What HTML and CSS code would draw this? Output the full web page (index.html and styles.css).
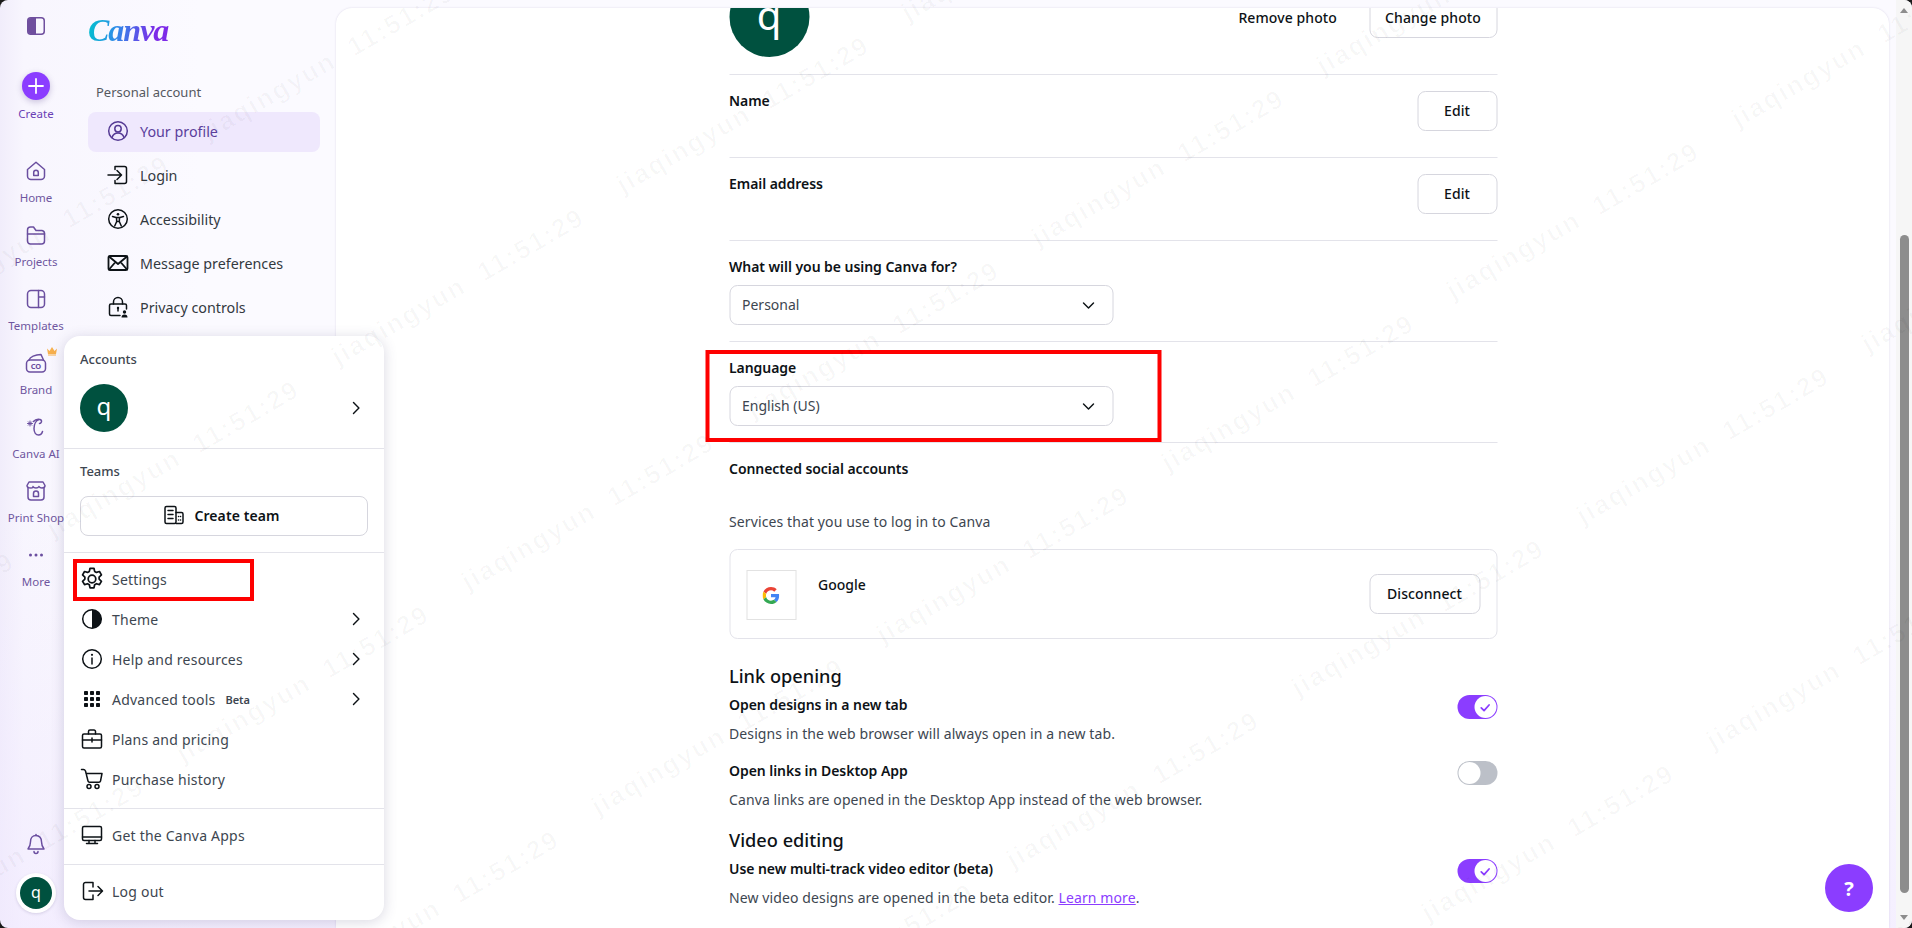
FILE: index.html
```html
<!DOCTYPE html>
<html lang="en">
<head>
<meta charset="utf-8">
<title>Canva settings</title>
<link rel="stylesheet" href="styles.css">
</head>
<body>
<svg class="sprite" width="0" height="0" aria-hidden="true">
  <symbol id="chev-r" viewBox="0 0 24 24"><path d="M9 5.500 15.500 12 9 18.500" fill="none" stroke="currentColor" stroke-width="1.700" stroke-linecap="round" stroke-linejoin="round"/></symbol>
  <symbol id="chev-d" viewBox="0 0 24 24"><path d="M6 9.500 12 15.500 18 9.500" fill="none" stroke="currentColor" stroke-width="1.700" stroke-linecap="round" stroke-linejoin="round"/></symbol>
  <symbol id="check" viewBox="0 0 24 24"><path d="M6 12.500 10.500 17 18.500 8" fill="none" stroke="currentColor" stroke-width="2.800" stroke-linecap="round" stroke-linejoin="round"/></symbol>
</svg>
<div class="app">
  <nav class="rail">
    <svg class="rail-toggle" viewBox="0 0 18 18"><rect x="0.750" y="0.750" width="16.500" height="16.500" rx="3" fill="none" stroke="currentColor" stroke-width="1.500"/><path d="M4 1h5v16H4a3 3 0 0 1-3-3V4a3 3 0 0 1 3-3Z" fill="currentColor"/></svg>
    <div class="create-btn"><svg viewBox="0 0 28 28" class="create-plus"><path d="M14 7v14M7 14h14" stroke="currentColor" stroke-width="1.800" stroke-linecap="round"/></svg></div>
    <span class="rail-label create-label">Create</span>
    <div class="rail-items">
      <a class="rail-item"><svg class="ico" viewBox="0 0 24 24"><path d="M3.500 10.500 12 3.200l8.500 7.300V17a3.500 3.500 0 0 1-3.500 3.500H7A3.500 3.500 0 0 1 3.500 17Z"/><path d="M9.700 16.500v-3a2.300 2.300 0 0 1 4.600 0v3Z"/></svg><span class="rail-label">Home</span></a>
      <a class="rail-item"><svg class="ico" viewBox="0 0 24 24"><path d="M3.500 7A3 3 0 0 1 6.500 4h3l2.500 3.500h6a3 3 0 0 1 2.500 3V18a3 3 0 0 1-3 3h-11a3 3 0 0 1-3-3Z"/><path d="M3.500 11h17"/></svg><span class="rail-label">Projects</span></a>
      <a class="rail-item"><svg class="ico" viewBox="0 0 24 24"><rect x="3.500" y="3.500" width="17" height="17" rx="3.500"/><path d="M14.500 3.500v17M14.500 10h6"/></svg><span class="rail-label">Templates</span></a>
      <a class="rail-item brand-item"><svg class="crown" viewBox="0 0 12 10"><path d="M1 2.500 3.500 5 6 1l2.500 4L11 2.500 10 8H2Z"/><path d="M2 8.500h8v1H2Z"/></svg><svg class="ico" viewBox="0 0 24 24"><rect x="2.500" y="9" width="19" height="12" rx="3.500"/><path d="M5 9c1-3 6-5.500 12-5.500L19.500 9"/><text class="co" x="12" y="18.400">CO</text></svg><span class="rail-label">Brand</span></a>
      <a class="rail-item"><svg class="ico" viewBox="0 0 24 24"><path d="M9.500 6.500C12 3.500 17 3.500 17.500 6c.3 1.500-1 2.500-2 2.500M15 4.500c-3 1-5 5-5 9 0 4 2 6.500 4.500 6.500 2 0 3.500-1.500 4-3.500"/><path d="M6 6v5M3.500 8.500h5M4.300 6.800l3.400 3.400M7.700 6.800l-3.400 3.400" class="thin"/></svg><span class="rail-label">Canva AI</span></a>
      <a class="rail-item"><svg class="ico" viewBox="0 0 24 24"><path d="M4 9v9a3 3 0 0 0 3 3h10a3 3 0 0 0 3-3V9"/><path d="M3 6.500 5 3h14l2 3.500c0 2-1.500 2.500-3 2.500-1.200 0-2.500-.5-3-1.500-.5 1-1.700 1.500-3 1.500s-2.500-.5-3-1.500C9.500 8.500 8.200 9 7 9 4.500 9 3 8.500 3 6.500Z"/><path d="M9.500 17.500v-3a2.500 2.500 0 0 1 5 0v3Z"/></svg><span class="rail-label">Print Shop</span></a>
      <a class="rail-item"><svg class="ico" viewBox="0 0 24 24"><circle cx="6.500" cy="12" r="1.500" class="solid"/><circle cx="12" cy="12" r="1.500" class="solid"/><circle cx="17.500" cy="12" r="1.500" class="solid"/></svg><span class="rail-label">More</span></a>
    </div>
    <svg class="ico bell" viewBox="0 0 24 24"><path d="M12 3.500c-3.500 0-5.500 2.800-5.500 6.200 0 3.500-1 5.300-2.500 7.300h16c-1.500-2-2.500-3.800-2.500-7.300 0-3.400-2-6.200-5.500-6.200Z"/><path d="M10 19.500a2 2 0 0 0 4 0M12 3.500V2.500"/></svg>
    <div class="rail-avatar"><span class="avatar small">q</span></div>
  </nav>

  <aside class="panel">
    <div class="logo">Canva</div>
    <div class="panel-title">Personal account</div>
    <a class="panel-row active"><svg class="ico" viewBox="0 0 24 24"><circle cx="12" cy="12" r="9.300"/><circle cx="12" cy="9.800" r="3.200"/><path d="M6 18.500c1-3 3.500-4.500 6-4.500s5 1.500 6 4.500"/></svg>Your profile</a>
    <a class="panel-row"><svg class="ico" viewBox="0 0 24 24"><path d="M9 3.500h9.500a2 2 0 0 1 2 2v13a2 2 0 0 1-2 2H9M9 3.500V6.500M9 17.500v3"/><path d="M2 12h13M11 7.500 15.500 12 11 16.500"/></svg>Login</a>
    <a class="panel-row"><svg class="ico" viewBox="0 0 24 24"><circle cx="12" cy="12" r="9.300"/><circle cx="12" cy="7.200" r="1.300" class="solid"/><path d="M6.500 9.500 10 10.500h4l3.500-1M10.500 10.500l.2 4-2 4.500M13.500 10.500l-.2 4 2 4.500M10.700 14.500h2.600"/></svg>Accessibility</a>
    <a class="panel-row"><svg class="ico bold" viewBox="0 0 24 24"><rect x="2.500" y="5" width="19" height="14" rx="1.500"/><path d="M3 5.500 12 13l9-7.500M3 18.500 9.500 11M21 18.500 14.500 11"/></svg>Message preferences</a>
    <a class="panel-row"><svg class="ico" viewBox="0 0 24 24"><path d="M7.500 9V7a4.500 4.500 0 0 1 9 0v2"/><path d="M14 20.500H5a1.500 1.500 0 0 1-1.500-1.500v-8.500A1.500 1.500 0 0 1 5 9h14a1.500 1.500 0 0 1 1.500 1.500V14"/><path d="M12 12.500v3.500"/><circle cx="12" cy="13" r="1.200" class="solid"/><circle cx="18.500" cy="17" r="1.700" class="solid"/><path d="M15.500 22.500a3 3 0 0 1 6 0Z" class="solid"/></svg>Privacy controls</a>
  </aside>

  <main class="main">
    <div class="content">
      <section class="row photo-row">
        <span class="avatar big">q</span>
        <div class="photo-actions">
          <span class="remove">Remove photo</span>
          <button class="btn change-btn">Change photo</button>
        </div>
      </section>
      <section class="row field-row">
        <span class="strong">Name</span>
        <button class="btn edit-btn">Edit</button>
      </section>
      <section class="row field-row">
        <span class="strong">Email address</span>
        <button class="btn edit-btn">Edit</button>
      </section>
      <section class="row select-row">
        <div class="strong">What will you be using Canva for?</div>
        <div class="select"><span>Personal</span><svg class="chev"><use href="#chev-d"/></svg></div>
      </section>
      <section class="row select-row language">
        <div class="strong">Language</div>
        <div class="select"><span>English (US)</span><svg class="chev"><use href="#chev-d"/></svg></div>
        <div class="red-box lang-box"></div>
      </section>
      <section class="social">
        <div class="strong">Connected social accounts</div>
        <p class="muted services">Services that you use to log in to Canva</p>
        <div class="social-card">
          <div class="g-box">
            <svg viewBox="0 0 48 48" class="g-logo"><path fill="#EA4335" d="M24 9.500c3.500 0 6.700 1.200 9.200 3.600l6.900-6.900C35.900 2.400 30.500 0 24 0 14.600 0 6.500 5.400 2.600 13.200l8 6.200C12.400 13.700 17.700 9.500 24 9.500Z"/><path fill="#4285F4" d="M47 24.500c0-1.600-.2-3.100-.4-4.500H24v9h12.900c-.6 3-2.200 5.500-4.800 7.200l7.700 6C44.400 37.900 47 31.800 47 24.500Z"/><path fill="#FBBC05" d="M10.500 28.600A14.500 14.500 0 0 1 9.800 24c0-1.600.3-3.100.7-4.600l-8-6.200A24 24 0 0 0 0 24c0 3.900.9 7.500 2.600 10.800l7.900-6.200Z"/><path fill="#34A853" d="M24 48c6.500 0 11.900-2.100 15.900-5.800l-7.700-6c-2.200 1.500-4.900 2.300-8.200 2.300-6.300 0-11.600-4.200-13.500-9.900l-8 6.200C6.500 42.600 14.600 48 24 48Z"/></svg>
          </div>
          <span class="strong-light g-name">Google</span>
          <button class="btn disconnect-btn">Disconnect</button>
        </div>
      </section>
      <h2 class="heading first">Link opening</h2>
      <div class="setting">
        <div><div class="strong">Open designs in a new tab</div><p class="muted desc">Designs in the web browser will always open in a new tab.</p></div>
        <span class="toggle on"><span class="knob"><svg class="tick"><use href="#check"/></svg></span></span>
      </div>
      <div class="setting spaced">
        <div><div class="strong">Open links in Desktop App</div><p class="muted desc">Canva links are opened in the Desktop App instead of the web browser.</p></div>
        <span class="toggle"><span class="knob"></span></span>
      </div>
      <h2 class="heading">Video editing</h2>
      <div class="setting">
        <div><div class="strong">Use new multi-track video editor (beta)</div><p class="muted desc">New video designs are opened in the beta editor. <a class="link">Learn more</a>.</p></div>
        <span class="toggle on"><span class="knob"><svg class="tick"><use href="#check"/></svg></span></span>
      </div>
    </div>
  </main>

  <div class="scrollbar">
    <span class="arrow up"></span>
    <div class="track"><span class="thumb"></span></div>
    <span class="arrow down"></span>
  </div>

  <div class="popup">
    <section class="pop-sec accounts">
      <div class="pop-title">Accounts</div>
      <div class="account-row"><span class="avatar medium">q</span><svg class="pchev"><use href="#chev-r"/></svg></div>
    </section>
    <section class="pop-sec teams">
      <div class="pop-title">Teams</div>
      <button class="btn create-team"><svg class="ico dark" viewBox="0 0 24 24"><rect x="3" y="3.500" width="11" height="17" rx="1.500"/><path d="M14 9.500h5.500a1.500 1.500 0 0 1 1.500 1.500v8a1.500 1.500 0 0 1-1.500 1.500H14M6 7.500h5M6 11.500h5M6 15.500h5M16.500 13.500h.1M18.500 13.500h.1M16.500 17h.1M18.500 17h.1"/></svg>Create team</button>
    </section>
    <section class="pop-sec menu">
      <a class="pop-row settings-row"><svg class="ico dark" viewBox="0 0 24 24"><g transform="translate(12 12) scale(1.150) translate(-12 -12)"><circle cx="12" cy="12" r="3.300"/><path d="M10.300 2.700h3.400l.6 2.700 1.600.9 2.600-.8 1.700 2.900-2 1.900v1.800l2 1.900-1.700 2.900-2.600-.8-1.600.9-.6 2.700h-3.400l-.6-2.700-1.600-.9-2.600.8-1.700-2.900 2-1.900v-1.800l-2-1.900 1.700-2.900 2.600.8 1.600-.9Z"/></g></svg>Settings<span class="red-box set-box"></span></a>
      <a class="pop-row"><svg class="ico dark" viewBox="0 0 24 24"><circle cx="12" cy="12" r="9.300"/><path d="M12 2.700a9.300 9.300 0 0 1 0 18.600Z" class="solid"/></svg>Theme<svg class="pchev"><use href="#chev-r"/></svg></a>
      <a class="pop-row"><svg class="ico dark" viewBox="0 0 24 24"><circle cx="12" cy="12" r="9.300"/><path d="M12 11v6"/><circle cx="12" cy="7.800" r="1.100" class="solid"/></svg>Help and resources<svg class="pchev"><use href="#chev-r"/></svg></a>
      <a class="pop-row"><svg class="ico dark" viewBox="0 0 24 24"><g class="solid"><rect x="4" y="4" width="4" height="4" rx=".8"/><rect x="10" y="4" width="4" height="4" rx=".8"/><rect x="16" y="4" width="4" height="4" rx=".8"/><rect x="4" y="10" width="4" height="4" rx=".8"/><rect x="10" y="10" width="4" height="4" rx=".8"/><rect x="16" y="10" width="4" height="4" rx=".8"/><rect x="4" y="16" width="4" height="4" rx=".8"/><rect x="10" y="16" width="4" height="4" rx=".8"/><rect x="16" y="16" width="4" height="4" rx=".8"/></g></svg>Advanced tools<span class="beta">Beta</span><svg class="pchev"><use href="#chev-r"/></svg></a>
      <a class="pop-row"><svg class="ico dark" viewBox="0 0 24 24"><rect x="2.500" y="7" width="19" height="14" rx="1.500"/><path d="M8.500 7V4.500a1.500 1.500 0 0 1 1.500-1.500h4a1.500 1.500 0 0 1 1.500 1.500V7M2.500 13h19M12 11v4"/></svg>Plans and pricing</a>
      <a class="pop-row"><svg class="ico dark" viewBox="0 0 24 24"><path d="M1.500 2.500H3.500c1 0 1.500.5 2 1.500l2.500 10c.2.800.8 1.200 1.500 1.200H19c.8 0 1.300-.5 1.500-1.200l1.500-7.500H6"/><circle cx="9" cy="19.500" r="2"/><circle cx="17" cy="19.500" r="2"/></svg>Purchase history</a>
    </section>
    <section class="pop-sec menu">
      <a class="pop-row"><svg class="ico dark" viewBox="0 0 24 24"><rect x="2.500" y="3.500" width="19" height="14" rx="1.500"/><path d="M2.500 14h19" class="thick"/><path d="M9 17.500v3M15 17.500v3M6.500 20.500h11"/></svg>Get the Canva Apps</a>
    </section>
    <section class="pop-sec menu last">
      <a class="pop-row"><svg class="ico dark" viewBox="0 0 24 24"><path d="M13 3.500H5.500a2 2 0 0 0-2 2v13a2 2 0 0 0 2 2H13V16M13 8V3.500"/><path d="M9 12h13M18 7.500 22.500 12 18 16.500"/></svg>Log out</a>
    </section>
  </div>

  <button class="help">?</button>

  <svg class="watermarks" width="1912" height="928" aria-hidden="true">
    <defs>
      <text id="wm" class="wm-text" transform="rotate(-30)">jiaqingyun  11:51:29</text>
      <g id="wm-row">
        <use href="#wm" x="-2280" y="1376"/><use href="#wm" x="-1995" y="1204"/><use href="#wm" x="-1710" y="1032"/><use href="#wm" x="-1425" y="860"/><use href="#wm" x="-1140" y="688"/><use href="#wm" x="-855" y="516"/><use href="#wm" x="-570" y="344"/><use href="#wm" x="-285" y="172"/><use href="#wm" x="0" y="0"/><use href="#wm" x="285" y="-172"/><use href="#wm" x="570" y="-344"/><use href="#wm" x="855" y="-516"/><use href="#wm" x="1140" y="-688"/>
      </g>
    </defs>
    <use href="#wm-row" x="803" y="-825"/><use href="#wm-row" x="933" y="-600"/><use href="#wm-row" x="1063" y="-375"/><use href="#wm-row" x="1193" y="-150"/><use href="#wm-row" x="1323" y="75"/><use href="#wm-row" x="1453" y="300"/><use href="#wm-row" x="1583" y="525"/><use href="#wm-row" x="1713" y="750"/><use href="#wm-row" x="1843" y="975"/><use href="#wm-row" x="1973" y="1200"/>
  </svg>
</div>
</body>
</html>
```

FILE: styles.css
```css
* { box-sizing: border-box; }
html, body { margin: 0; height: 100%; background: #1a1a1a; }
body { font-family: "Noto Sans", "Liberation Sans", sans-serif; font-size: 14px; color: #0d1216; overflow: hidden; }
button { font-family: inherit; }
p { margin: 0; }
.sprite { position: absolute; }

.app { position: relative; display: flex; width: 1912px; height: 928px; overflow: hidden; border-radius: 8px; background: linear-gradient(180deg, rgba(240, 232, 255, 0) 55%, rgba(240, 232, 255, .6) 100%), linear-gradient(90deg, #f1edfb 0, #f8f6fe 24px, #fbfaff 200px, #fbfaff 100%); }

/* left rail */
.rail { width: 72px; flex: none; display: flex; flex-direction: column; align-items: center; padding: 17px 0 15px; color: #6b4fa0; }
.rail-toggle { width: 18px; height: 18px; flex: none; color: #6f4f9e; }
.create-btn { width: 28px; height: 28px; margin-top: 37px; border-radius: 50%; background: #8b3dff; color: #fff; box-shadow: 0 2px 6px rgba(60, 30, 120, .25); flex: none; }
.create-plus { display: block; width: 28px; height: 28px; }
.rail-label { display: block; font-size: 11.500px; line-height: 16px; white-space: nowrap; text-align: center; color: #6f569f; }
.create-label { margin-top: 6px; color: #6a3fb5; }
.rail-items { display: flex; flex-direction: column; gap: 17px; margin-top: 37px; }
.rail-item { position: relative; display: flex; flex-direction: column; align-items: center; gap: 7px; width: 72px; }
.crown { position: absolute; left: 46px; top: -5px; width: 12px; height: 10px; fill: #f7b04d; }
.co { font-size: 7.500px; font-weight: 700; text-anchor: middle; fill: currentColor; stroke: none; }
.bell { margin-top: auto; }
.rail-avatar { width: 40px; height: 40px; margin-top: 17px; border-radius: 50%; background: #fff; display: flex; align-items: center; justify-content: center; box-shadow: 0 1px 3px rgba(40, 30, 80, .15); }

/* generic icon */
.ico { width: 24px; height: 24px; flex: none; fill: none; stroke: currentColor; stroke-width: 1.500; stroke-linecap: round; stroke-linejoin: round; }
.ico .solid { fill: currentColor; stroke: none; }
.ico .thin { stroke-width: 1; }
.ico .thick { stroke-width: 1.500; }
.ico.bold { stroke-width: 1.800; }
.ico.dark { color: #0d1216; }

.avatar { display: flex; align-items: center; justify-content: center; border-radius: 50%; background: #00513f; color: #fff; font-weight: 400; flex: none; }
.avatar.small { width: 32px; height: 32px; font-size: 16px; padding-bottom: 3px; }
.avatar.medium { width: 48px; height: 48px; font-size: 24px; padding-bottom: 5px; }
.avatar.big { width: 80px; height: 80px; font-size: 40px; padding-bottom: 6px; }

/* second panel */
.panel { width: 264px; flex: none; padding: 12px 16px 0; color: #3d4650; }
.logo { height: 36px; margin-bottom: 34px; font-family: "Liberation Serif", serif; font-style: italic; font-weight: 700; font-size: 32px; letter-spacing: -1px; line-height: 36px; width: max-content; padding-right: 2px; background: linear-gradient(100deg, #00c4cc 0, #2d8ce8 35%, #7d2ae8 80%); -webkit-background-clip: text; background-clip: text; color: transparent; }
.panel-title { height: 20px; margin-bottom: 10px; padding-left: 8px; font-size: 13px; line-height: 20px; color: #55585f; }
.panel-row { display: flex; align-items: center; gap: 10px; height: 40px; margin-bottom: 4px; padding: 0 0 2px 18px; border-radius: 8px; font-size: 14.300px; color: #33393f; }
.panel-row .ico { color: #0d1216; }
.panel-row.active { background: #efe8fd; color: #5b3f9c; }
.panel-row.active .ico { color: #553a94; }

/* main card */
.main { flex: 1; margin-top: 8px; background: #fff; border-radius: 16px 16px 0 0; box-shadow: 0 0 2px rgba(64, 50, 120, .18); overflow: hidden; min-width: 0; margin-right: 7px; }
.content { width: 768px; margin: -31px auto 0; transform: translateX(0.5px); }
.row { border-bottom: 1px solid #e3e3ea; }
.strong { font-weight: 600; font-size: 14px; letter-spacing: -.05px; line-height: 22px; color: #0d1216; white-space: nowrap; }
.strong-light { font-weight: 500; font-size: 14px; line-height: 22px; color: #0d1216; }
.muted { font-size: 14px; letter-spacing: .11px; line-height: 22px; color: #3d4650; white-space: nowrap; }

.photo-row { display: flex; justify-content: space-between; height: 98px; }
.photo-actions { display: flex; align-items: center; gap: 32px; height: 40px; margin-top: 21px; }
.remove { font-weight: 500; font-size: 14px; letter-spacing: .1px; color: #0d1216; padding-bottom: 2px; }
.btn { height: 40px; background: #fff; border: 1px solid #d6d6de; border-radius: 8px; font-weight: 500; font-size: 14px; letter-spacing: .1px; color: #0d1216; padding: 0 0 2px; }
.change-btn { width: 128px; }
.field-row { display: flex; justify-content: space-between; height: 83px; padding-top: 16px; }
.field-row .strong { margin-top: -1px; }
.edit-btn { width: 80px; }
.select-row { position: relative; height: 101px; padding-top: 15px; }
.select { display: flex; align-items: center; justify-content: space-between; width: 384px; height: 40px; margin-top: 7px; padding: 0 14px 1px 12px; border: 1px solid #d6d6de; border-radius: 8px; font-size: 14px; color: #3d4650; }
.chev { width: 20px; height: 20px; color: #0d1216; }
.red-box { position: absolute; border: 4px solid #fe0000; pointer-events: none; }
.lang-box { left: -24px; top: 8px; width: 456px; height: 92px; }

.social { padding-top: 15px; }
.services { margin-top: 31px; }
.social-card { display: flex; align-items: flex-start; height: 90px; margin-top: 16px; padding: 20px 16px 0; border: 1px solid #e3e3ea; border-radius: 8px; }
.g-box { display: flex; align-items: center; justify-content: center; width: 50px; height: 50px; border: 1px solid #e2e2e2; flex: none; }
.g-logo { width: 17px; height: 17px; }
.g-name { margin-left: 22px; margin-top: 4px; }
.disconnect-btn { width: 111px; margin-left: auto; margin-top: 4px; }

.heading { margin: 15px 0 4px; font-size: 18.200px; font-weight: 500; line-height: 28px; color: #0d1216; }
.heading.first { margin-top: 23px; }
.setting { display: flex; justify-content: space-between; align-items: flex-start; }
.setting.spaced { margin-top: 15px; }
.desc { margin-top: 7px; }
.link { color: #8b3dff; text-decoration: underline; }
.toggle { position: relative; display: block; width: 40px; height: 24px; margin-top: 1px; border-radius: 12px; background: #bcc0c8; }
.toggle.on { background: #8b3dff; }
.knob { position: absolute; left: 1px; top: 1px; width: 22px; height: 22px; border-radius: 50%; background: #fff; display: flex; align-items: center; justify-content: center; color: #8b3dff; }
.toggle.on .knob { left: auto; right: 1px; }
.tick { width: 15px; height: 15px; }

/* scrollbar */
.scrollbar { position: relative; width: 16px; flex: none; background: #f6f6f6; display: flex; flex-direction: column; align-items: center; }
.track { flex: 1; width: 100%; padding: 235px 2px 35px 4px; }
.thumb { display: block; height: 100%; width: 9px; border-radius: 5px; background: #8d8d8d; }
.arrow { position: absolute; left: 4px; width: 0; height: 0; border-left: 4.500px solid transparent; border-right: 4.500px solid transparent; }
.arrow.up { top: 8px; border-bottom: 5px solid #8d8d8d; }
.arrow.down { bottom: 8px; border-top: 5px solid #8d8d8d; }

/* popup */
.popup { position: absolute; left: 64px; top: 336px; width: 320px; height: 584px; background: #fff; border-radius: 16px; box-shadow: 0 2px 14px rgba(64, 60, 110, .2); color: #3d4650; }
.pop-sec { padding: 13px 16px 16px; border-bottom: 1px solid #e3e3ea; }
.pop-title { font-size: 13px; font-weight: 500; line-height: 21px; color: #3d4650; }
.accounts { height: 113px; }
.account-row { display: flex; align-items: center; justify-content: space-between; margin-top: 14px; padding-right: 2px; }
.pchev { width: 20px; height: 20px; color: #0d1216; flex: none; margin-left: auto; }
.teams { height: 104px; padding-top: 12px; }
.create-team { display: flex; align-items: center; justify-content: center; gap: 8px; width: 288px; margin-top: 14px; padding-right: 6px; font-weight: 600; font-size: 14px; }
.menu { padding: 7px 0 8px; }
.menu.last { border-bottom: 0; }
.pop-row { position: relative; display: flex; align-items: center; gap: 8px; height: 40px; padding: 0 18px 2px 16px; font-size: 14px; letter-spacing: .22px; color: #3d4650; }
.beta { padding: 0 2px; font-size: 11px; font-weight: 600; letter-spacing: 0; color: #3d4650; }
.set-box { left: 9px; top: -1px; width: 181px; height: 42px; }

.help { position: absolute; left: 1825px; top: 864px; width: 48px; height: 48px; border: 0; border-radius: 50%; background: #8b3dff; color: #fff; font-size: 20px; font-weight: 700; }

.watermarks { position: absolute; left: 0; top: 0; pointer-events: none; }
.wm-text { font-family: "Liberation Sans", sans-serif; font-weight: 700; font-size: 26px; letter-spacing: 2px; white-space: pre; fill: rgba(0, 0, 0, .027); }
```
